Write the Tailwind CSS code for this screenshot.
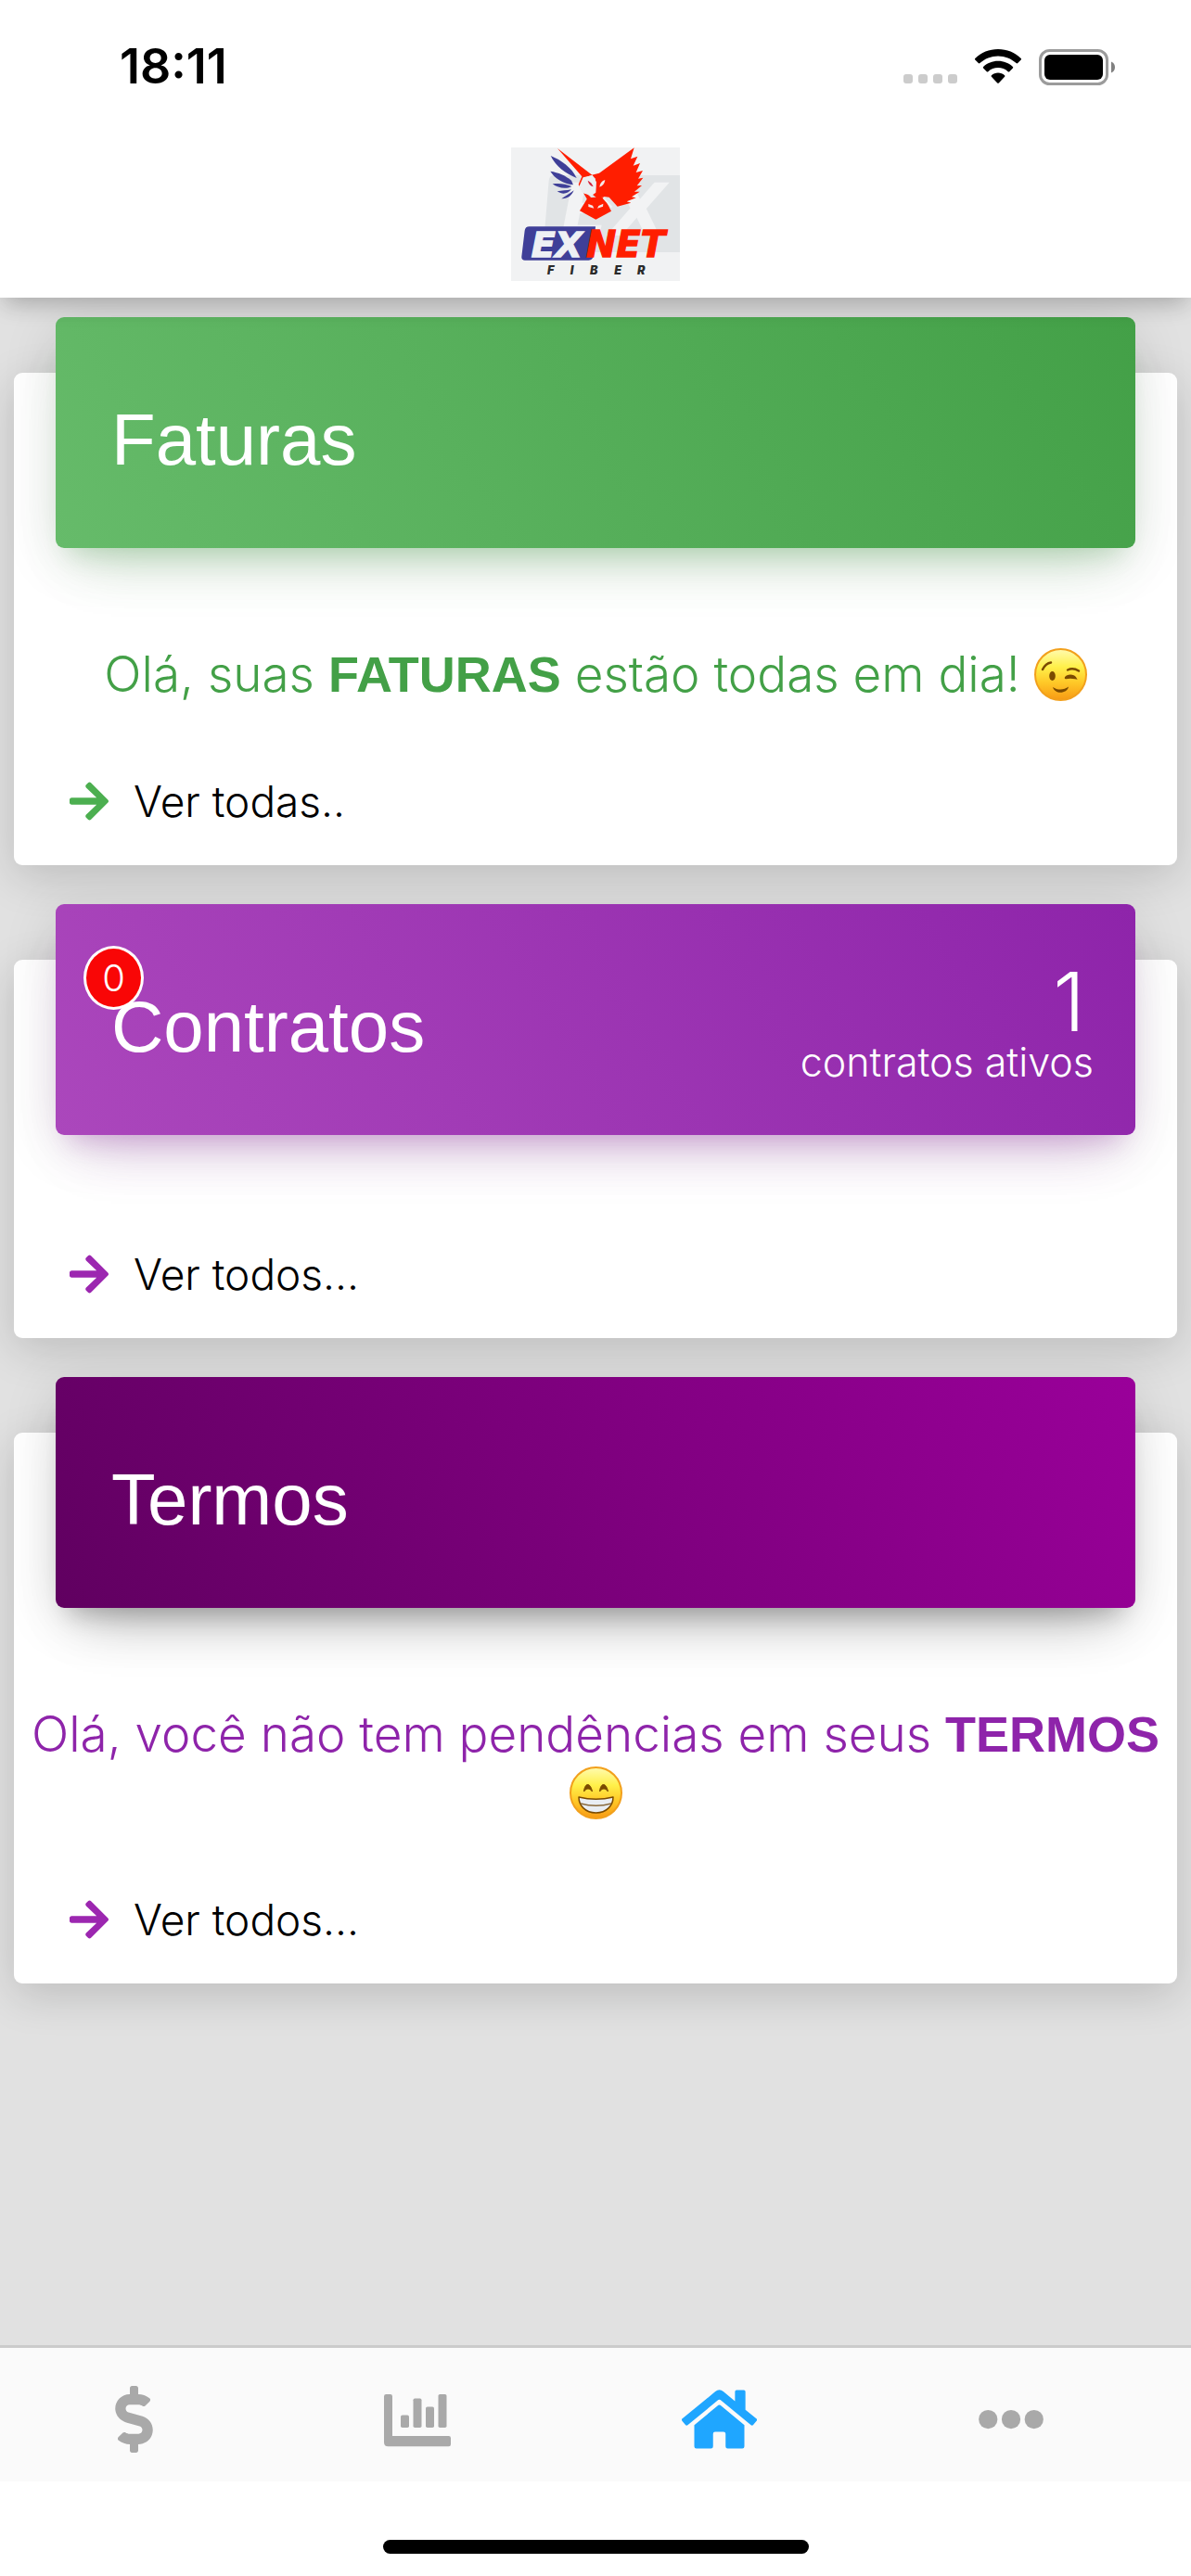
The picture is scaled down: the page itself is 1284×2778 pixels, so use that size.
<!DOCTYPE html>
<html lang="pt-BR">
<head>
    <meta charset="UTF-8">
    <meta name="viewport" content="width=device-width, initial-scale=1.0">
    <title>EXNET Fiber</title>
    <script src="https://cdn.jsdelivr.net/npm/@tailwindcss/browser@4"></script>
</head>
<body class="min-h-screen flex flex-col bg-[#e1e1e1] text-black font-['Liberation_Sans',Arial,sans-serif]">
    <!-- Header -->
    <header class="relative z-10 bg-white pb-[18px] shadow-[0_12px_24px_-6px_rgba(0,0,0,0.22),0_3px_30px_0_rgba(0,0,0,0.06)]">
        <!-- Status bar -->
        <div class="flex items-center justify-between h-[144px] pl-[129px] pr-[82px]">
            <time class="text-[52px] leading-[60px] font-semibold font-['Inter',sans-serif]">18:11</time>
            <div class="flex items-center gap-[19px]">
                <svg class="w-[58px] h-[40px]" viewBox="0 0 58 40" fill="#cccccc" aria-hidden="true">
                    <rect x="0" y="28" width="10" height="10" rx="3"/>
                    <rect x="16" y="28" width="10" height="10" rx="3"/>
                    <rect x="32" y="28" width="10" height="10" rx="3"/>
                    <rect x="48" y="28" width="10" height="10" rx="3"/>
                </svg>
                <svg class="w-[50px] h-[38px]" viewBox="0 0 50 38" aria-hidden="true">
                    <path d="M25 0C34.5 0 43.300 3.700 49.700 9.900c.5.500.5 1.100 0 1.600l-3.500 3.600c-.500.500-1.100.500-1.600 0C39.300 10.200 32.500 7.400 25 7.400S10.700 10.200 5.400 15.100c-.5.500-1.100.500-1.600 0L.3 11.500c-.500-.500-.500-1.100 0-1.600C6.700 3.700 15.500 0 25 0z"/>
                    <path d="M25 12.700c6.100 0 11.700 2.300 15.900 6.200.5.500.5 1.100 0 1.600l-3.700 3.700c-.5.500-1 .5-1.500 0-2.900-2.600-6.600-4.100-10.700-4.100s-7.800 1.500-10.700 4.100c-.5.500-1 .5-1.500 0l-3.700-3.700c-.5-.5-.5-1.100 0-1.600 4.200-3.900 9.800-6.200 15.900-6.200z"/>
                    <path d="M25 25.500c2.700 0 5.200 1 7.100 2.700.5.500.5 1 0 1.500l-6.300 6.700c-.5.500-1.100.5-1.600 0l-6.300-6.700c-.5-.5-.5-1 0-1.500 1.900-1.700 4.400-2.700 7.100-2.700z"/>
                </svg>
                <svg class="w-[82px] h-[39px]" viewBox="0 0 82 39" aria-hidden="true">
                    <rect x="1.500" y="1.500" width="72" height="36" rx="10" fill="none" stroke="#9b9b9b" stroke-width="3"/>
                    <rect x="6" y="6" width="63" height="27" rx="6"/>
                    <path d="M78 13.500c2.500 1 4 3.300 4 6s-1.500 5-4 6z" fill="#808080"/>
                </svg>
            </div>
        </div>

        <!-- Logo -->
        <svg class="block mx-auto mt-[15px] w-[182px] h-[144px]" viewBox="33 27 546 432" role="img" aria-label="EXNET Fiber">
            <rect x="33" y="27" width="546" height="432" fill="#f1f2f3"/>
            <path d="M172 117H579V366H150q-14 0-13-14l18-218q2-17 17-17z" fill="#e1e4e6"/>
            <text x="192" y="312" font-size="236" fill="#f2f3f4" class="font-['DejaVu_Sans',sans-serif] font-bold italic">EX</text>
            <!-- Blue feathers -->
            <g fill="#3f3f98">
                <path d="M161 54c34 14 68 38 84 72-36-14-68-38-84-72z"/>
                <path d="M160 104c26 4 50 14 68 30l6 14c-32-4-60-20-74-44z"/>
                <path d="M167 145c20-3 42-1 62 8-18 10-44 6-62-8z"/>
                <path d="M182 169c16-2 30-3 46-6-12 14-28 18-46 6z"/>
                <path d="M196 193c12-8 24-14 40-27-6 16-20 28-40 27z"/>
            </g>
            <!-- Bird -->
            <g fill="#ff1e00">
                <path d="M183 30l112 86-28 10-8 18 12 26 20 18-8 14-32-55 11-26z"/>
                <path d="M294 116l24-6L431 28l-11 36 22-8-14 30 22-8-13 30 22-6-15 26 16-3-20 26 16-1-24 20 17 0-26 17 14 3-30 12 14 4-44 12-27-30-16-2-22 6-22-18 14-22 2-24z"/>
                <path d="M281 190l52-3 24 46-50 27-52-28z"/>
            </g>
            <path d="M266 124l30-7 13 22-2 34-14 10-28-8-12-22z" fill="#eceef0"/>
            <path d="M281 134c8 4 14 10 18 20-10-2-16-10-18-20z" fill="#d2243c"/>
            <path d="M319 155q2-18 18-23-2 17-18 23zM283 210l14 5 4 9-18-5zM331 209l-15 7-4 8 18-6z" fill="#f6e9e8"/>
            <path d="M331 189l28 32" stroke="#f1f2f3" stroke-width="6"/>
            <!-- Wordmark -->
            <path d="M92 283H306l-8 96q-1 13-14 13H78q-12 0-11-12l10-84q2-13 15-13z" fill="#3f3f98"/>
            <g class="font-['DejaVu_Sans',sans-serif] font-bold italic" stroke-width="4">
                <text x="98" y="380" font-size="114" fill="#eef0f4" stroke="#eef0f4">EX</text>
                <text x="276" y="380" font-size="116" fill="#ff1e00" stroke="#ff1e00">NET</text>
            </g>
            <text x="150 224 288 367 441" y="439" font-size="38" fill="#2b2b2b" class="font-['Inter',sans-serif] font-black italic">FIBER</text>
        </svg>
    </header>

    <main class="flex-1 flex flex-col gap-[102px] px-[15px] pt-[81px] pb-[60px]">
        <!-- Faturas -->
        <section class="bg-white rounded-[9px] pb-[39px] shadow-[0_12px_48px_0_rgba(0,0,0,0.16)]">
            <div class="-mt-[60px] mx-[45px] min-h-[249px] rounded-[9px] pl-[60px] pr-[45px] text-white bg-[linear-gradient(60deg,#66bb6a,#43a047)] shadow-[0_36px_60px_-30px_rgba(76,175,80,0.28),0_12px_60px_0_rgba(0,0,0,0.12),0_21px_24px_-15px_rgba(76,175,80,0.2)]">
                <h2 class="pt-[87px] text-[78px] leading-[90px]">Faturas</h2>
            </div>
            <p class="mt-[105px] text-center text-[53px] leading-[63px] font-light text-[#43a047] font-['Inter',sans-serif]">
                Olá, suas <b class="text-[54px] leading-none font-bold font-['Liberation_Sans',Arial,sans-serif]">FATURAS</b> estão todas em dia!
                <svg class="inline-block align-[-10px] w-[57px] h-[57px]" viewBox="0 0 57 57" role="img" aria-label="😉">
                    <defs>
                        <linearGradient id="face" x1="0" y1="0" x2="0" y2="1">
                            <stop offset="0" stop-color="#fffbb0"/>
                            <stop offset=".35" stop-color="#fff04a"/>
                            <stop offset=".65" stop-color="#ffc928"/>
                            <stop offset="1" stop-color="#f79a14"/>
                        </linearGradient>
                    </defs>
                    <circle cx="28.500" cy="28.500" r="27.500" fill="url(#face)" stroke="#f2a01c" stroke-width="2"/>
                    <g fill="none" stroke="#7a4a00" stroke-width="2.500" stroke-linecap="round">
                        <path d="M9 23c2-4 5-7 9-7.500M36 23.500c4-2 8-1.500 12 1M34 32c2-3 8-3 10 0-3-.500-7-.500-10 0"/>
                    </g>
                    <ellipse cx="19.500" cy="30" rx="3.300" ry="5" fill="#7a4a00"/>
                    <path d="M20 42c5 3.500 12 3.500 17-.5-1.500 8-15 8.500-17 .5z" fill="#7a4a00"/>
                </svg>
            </p>
            <a href="#" class="flex items-center gap-[27px] h-[60px] mt-[75px] ml-[60px] text-[46px] leading-[60px] font-light font-['Inter',sans-serif]">
                <svg class="w-[42px] h-[48px]" viewBox="0 0 448 512" fill="#4caf50" aria-hidden="true"><path d="M190.500 66.900l22.200-22.200c9.400-9.400 24.600-9.400 33.900 0L441 239c9.400 9.400 9.400 24.600 0 33.900L246.600 467.300c-9.400 9.400-24.600 9.400-33.900 0l-22.200-22.200c-9.500-9.500-9.300-25 .4-34.300L311.400 296H24c-13.300 0-24-10.700-24-24v-32c0-13.300 10.700-24 24-24h287.400L190.900 101.200c-9.800-9.300-10-24.800-.4-34.300z"/></svg>
                Ver todas..
            </a>
        </section>

        <!-- Contratos -->
        <section class="bg-white rounded-[9px] pb-[39px] shadow-[0_12px_48px_0_rgba(0,0,0,0.16)]">
            <div class="relative -mt-[60px] mx-[45px] min-h-[249px] flex justify-between items-start rounded-[9px] pl-[60px] pr-[45px] text-white bg-[linear-gradient(60deg,#ab47bc,#8e24aa)] shadow-[0_36px_60px_-30px_rgba(156,39,176,0.28),0_12px_60px_0_rgba(0,0,0,0.12),0_21px_24px_-15px_rgba(156,39,176,0.2)]">
                <span class="absolute left-[30px] top-[45px] w-[65px] h-[69px] flex items-center justify-center rounded-[50%] border-3 border-white bg-[#f90606] text-[40px] font-light font-['Inter',sans-serif]">0</span>
                <h2 class="relative pt-[87px] text-[78px] leading-[90px]">Contratos</h2>
                <div class="pt-[68px] text-right font-light font-['Inter',sans-serif]">
                    <div class="pr-[9px] text-[88px] leading-[75px]">1</div>
                    <div class="text-[43px] leading-[54px]">contratos ativos</div>
                </div>
            </div>
            <a href="#" class="flex items-center gap-[27px] h-[60px] mt-[120px] ml-[60px] text-[46px] leading-[60px] font-light font-['Inter',sans-serif]">
                <svg class="w-[42px] h-[48px]" viewBox="0 0 448 512" fill="#9c27b0" aria-hidden="true"><path d="M190.500 66.900l22.200-22.200c9.400-9.400 24.600-9.400 33.900 0L441 239c9.400 9.400 9.400 24.600 0 33.900L246.600 467.300c-9.400 9.400-24.600 9.400-33.900 0l-22.200-22.200c-9.500-9.500-9.300-25 .4-34.300L311.400 296H24c-13.300 0-24-10.700-24-24v-32c0-13.300 10.700-24 24-24h287.400L190.900 101.200c-9.800-9.300-10-24.800-.4-34.300z"/></svg>
                Ver todos...
            </a>
        </section>

        <!-- Termos -->
        <section class="bg-white rounded-[9px] pb-[39px] shadow-[0_12px_48px_0_rgba(0,0,0,0.16)]">
            <div class="-mt-[60px] mx-[45px] min-h-[249px] rounded-[9px] pl-[60px] pr-[45px] text-white bg-[linear-gradient(60deg,#600060,#9a009a)] shadow-[0_36px_60px_-30px_rgba(0,0,0,0.28),0_12px_60px_0_rgba(0,0,0,0.12),0_21px_24px_-15px_rgba(0,0,0,0.2)]">
                <h2 class="pt-[87px] text-[78px] leading-[90px]">Termos</h2>
            </div>
            <p class="mt-[105px] text-center text-[53px] leading-[63px] font-light text-[#8e24aa] font-['Inter',sans-serif]">
                Olá, você não tem pendências em seus <b class="text-[54px] leading-none font-bold font-['Liberation_Sans',Arial,sans-serif]">TERMOS</b>
                <svg class="inline-block align-[-10px] w-[57px] h-[57px]" viewBox="0 0 57 57" role="img" aria-label="😁">
                    <circle cx="28.500" cy="28.500" r="27.500" fill="url(#face)" stroke="#f2a01c" stroke-width="2"/>
                    <path d="M15.500 27c1-10 7-10 9 0-3-4-6-4-9 0zM32.500 27c1-10 7-10 9 0-3-4-6-4-9 0z" fill="#7a4a00" stroke="#7a4a00"/>
                    <path d="M10 33c12 3 25 3 37 0 0 9-7 17-18.500 17S10 42 10 33z" fill="#e9edf2" stroke="#7a4a00" stroke-width="1.500" stroke-linejoin="round"/>
                    <path d="M12 40c11 3 22 3 33 0" fill="none" stroke="#8a6a3c" stroke-width="1.500"/>
                </svg>
            </p>
            <a href="#" class="flex items-center gap-[27px] h-[60px] mt-[75px] ml-[60px] text-[46px] leading-[60px] font-light font-['Inter',sans-serif]">
                <svg class="w-[42px] h-[48px]" viewBox="0 0 448 512" fill="#9c27b0" aria-hidden="true"><path d="M190.500 66.900l22.200-22.200c9.400-9.400 24.600-9.400 33.900 0L441 239c9.400 9.400 9.400 24.600 0 33.900L246.600 467.300c-9.400 9.400-24.600 9.400-33.900 0l-22.200-22.200c-9.500-9.500-9.300-25 .4-34.300L311.400 296H24c-13.300 0-24-10.700-24-24v-32c0-13.300 10.700-24 24-24h287.400L190.900 101.200c-9.800-9.300-10-24.800-.4-34.300z"/></svg>
                Ver todos...
            </a>
        </section>
    </main>

    <!-- Tab bar -->
    <footer class="sticky bottom-0 bg-white">
        <nav class="grid grid-cols-[289fr_322fr_329fr_300fr_44fr] justify-items-center border-t-3 border-[#cbcbcb] bg-[#fafafa] pt-[41px] pb-[31px] text-[#a9a9a9]">
            <button type="button" aria-label="Faturas">
                <svg class="w-[41px] h-[72px]" viewBox="0 0 288 512" fill="currentColor"><path d="M209.200 233.400l-108-31.600C88.700 198.200 80 186.500 80 173.500c0-16.300 13.200-29.500 29.500-29.500h66.300c12.200 0 24.200 3.700 34.200 10.500 6.100 4.100 14.300 3.100 19.500-2l34.800-34c7.100-6.900 6.100-18.400-1.800-24.500C238 74.800 207.400 64.100 176 64V16c0-8.800-7.200-16-16-16h-32c-8.800 0-16 7.200-16 16v48h-2.500C45.800 64-5.400 118.700.5 183.600c4.200 46.100 39.400 83.600 83.800 96.600l102.500 30c12.500 3.700 21.200 15.300 21.200 28.300 0 16.300-13.200 29.500-29.500 29.500h-66.300C100 368 88 364.300 78 357.500c-6.100-4.100-14.300-3.100-19.500 2l-34.800 34c-7.100 6.900-6.100 18.400 1.800 24.500 24.500 19.200 55.100 29.900 86.500 30v48c0 8.800 7.200 16 16 16h32c8.800 0 16-7.200 16-16v-48.200c46.600-.9 90.300-28.600 105.700-72.700 21.500-61.600-14.600-124.800-72.500-141.700z"/></svg>
            </button>
            <button type="button" aria-label="Consumo">
                <svg class="w-[72px] h-[72px]" viewBox="0 0 512 512" fill="currentColor">
                    <path d="M16 64h32q16 0 16 16v304h432q16 0 16 16v48q0 16-16 16H32Q0 464 0 432V80q0-16 16-16z"/>
                    <rect x="128" y="224" width="64" height="96" rx="13"/>
                    <rect x="224" y="96" width="64" height="224" rx="13"/>
                    <rect x="320" y="160" width="64" height="160" rx="13"/>
                    <rect x="416" y="64" width="64" height="256" rx="13"/>
                </svg>
            </button>
            <button type="button" aria-label="Início" class="text-[#1fa6ff]">
                <svg class="w-[81px] h-[72px]" viewBox="0 0 576 512" fill="currentColor"><path d="M280.370 148.260L96 300.110V464a16 16 0 0 0 16 16l112.060-.290a16 16 0 0 0 15.920-16V368a16 16 0 0 1 16-16h64a16 16 0 0 1 16 16v95.640a16 16 0 0 0 16 16.050L464 480a16 16 0 0 0 16-16V300L295.670 148.260a12.190 12.190 0 0 0-15.300 0zM571.600 251.470L488 182.560V44.050a12 12 0 0 0-12-12h-56a12 12 0 0 0-12 12v72.610L318.470 43a48 48 0 0 0-61 0L4.340 251.470a12 12 0 0 0-1.600 16.900l25.500 31A12 12 0 0 0 45.150 301l235.220-193.740a12.190 12.190 0 0 1 15.300 0L530.900 301a12 12 0 0 0 16.900-1.600l25.500-31a12 12 0 0 0-1.700-16.930z"/></svg>
            </button>
            <button type="button" aria-label="Mais">
                <svg class="w-[72px] h-[72px]" viewBox="0 0 512 512" fill="currentColor">
                    <circle cx="80" cy="256" r="72"/>
                    <circle cx="256" cy="256" r="72"/>
                    <circle cx="432" cy="256" r="72"/>
                </svg>
            </button>
        </nav>
        <div class="flex justify-center pt-[63px] pb-[24px]">
            <div class="w-[459px] h-[15px] rounded-full bg-black"></div>
        </div>
    </footer>
</body>
</html>
